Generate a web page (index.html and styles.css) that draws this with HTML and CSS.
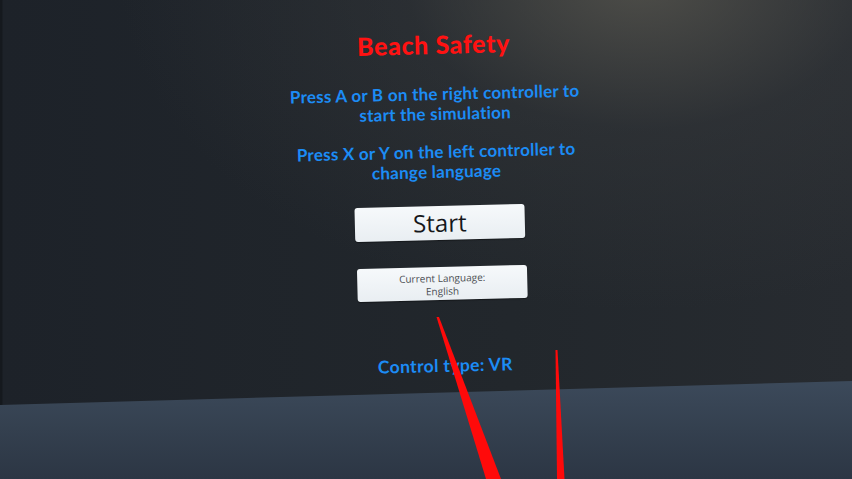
FILE: index.html
```html
<!DOCTYPE html>
<html lang="en">
<head>
    <meta charset="UTF-8">
    <title>Beach Safety</title>
    <link rel="stylesheet" href="styles.css">
</head>
<body>
    <div class="scene">
        <div class="floor"></div>

        <div class="menu-panel">
            <h1 class="title">Beach Safety</h1>
            <p class="hint">Press A or B on the right controller to<br>start the simulation</p>
            <p class="hint hint-second">Press X or Y on the left controller to<br>change language</p>
            <button class="menu-button start-button">Start</button>
            <button class="menu-button lang-button">Current Language:<br>English</button>
            <p class="control-type">Control type: VR</p>
        </div>

        <!-- controller pointer rays -->
        <svg class="rays" viewBox="0 0 852 479" width="852" height="479">
            <polygon points="436.5,317 439,317 501,479 486,479" fill="#ff0a0a"/>
            <polygon points="555.5,350 557.5,350 564.5,479 557,479" fill="#ff0a0a"/>
        </svg>
    </div>
</body>
</html>
```

FILE: styles.css
```css
body {
    margin: 0;
    background-color: #1e2329;
    font-family: Lato, "Open Sans", sans-serif;
}

.scene {
    position: relative;
    width: 852px;
    height: 479px;
    overflow: hidden;
    background:
        radial-gradient(ellipse 520px 330px at 640px -20px, rgba(92, 90, 82, 0.75), rgba(60, 62, 64, 0.35) 45%, rgba(30, 35, 41, 0) 100%),
        linear-gradient(90deg, #15191e 0, #15191e 2px, #1d2229 3px, #22272c 60%, #272b30 100%);
}

.floor {
    position: absolute;
    left: 0;
    right: 0;
    bottom: 0;
    height: 100px;
    background: linear-gradient(180deg, #3c4a5b 0%, #34404f 50%, #2c3644 100%);
    clip-path: polygon(0 26px, 852px 2px, 852px 100px, 0 100px);
}

.menu-panel {
    display: flex;
    flex-direction: column;
    align-items: center;
    width: 340px;
    margin-left: 267px;
    padding-top: 29px;
    text-align: center;
    transform: rotate(-1.4deg);
}

.title {
    margin: 0;
    font-size: 25px;
    line-height: 30px;
    font-weight: 900;
    color: #ff1212;
    letter-spacing: 0.6px;
}

.hint {
    margin: 25px 0 0;
    font-size: 17px;
    line-height: 20px;
    font-weight: 700;
    color: #1c8cf5;
    letter-spacing: 0.25px;
}

.hint-second {
    margin-top: 18px;
}

.menu-button {
    display: block;
    width: 170px;
    border: none;
    border-radius: 3px;
    background: linear-gradient(180deg, #f6f9fb, #e9eef2);
    box-shadow: 0 1px 1px rgba(0, 0, 0, 0.4);
    font-family: "Open Sans", sans-serif;
    text-align: center;
    padding: 0;
}

.start-button {
    margin: 24px 0 0 4px;
    height: 34px;
    font-size: 24px;
    line-height: 34px;
    color: #15171a;
}

.lang-button {
    margin: 27px 0 0 6px;
    height: 33px;
    font-size: 10px;
    line-height: 13px;
    color: #4a4d52;
    padding-top: 3px;
}

.control-type {
    margin: 55px 0 0 8px;
    font-size: 17.5px;
    line-height: 22px;
    font-weight: 700;
    color: #1c8cf5;
    letter-spacing: 0.35px;
}

.rays {
    position: absolute;
    left: 0;
    top: 0;
}
```
